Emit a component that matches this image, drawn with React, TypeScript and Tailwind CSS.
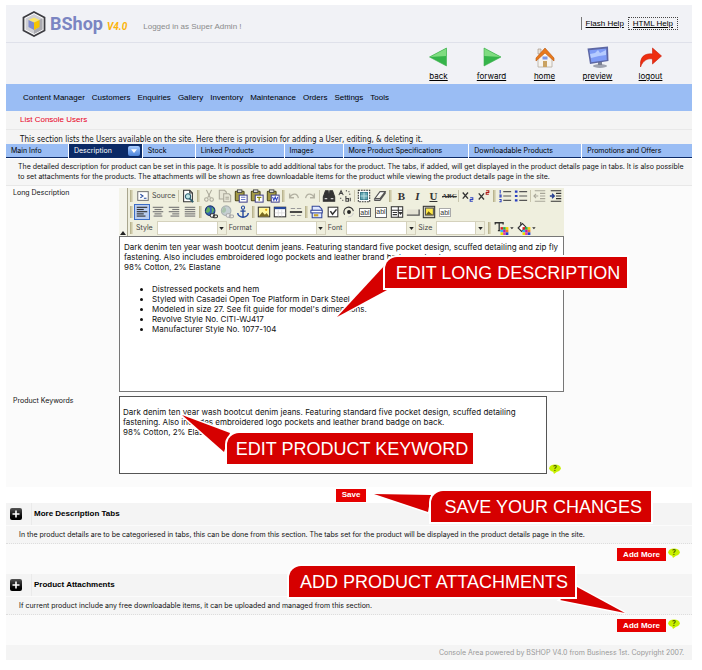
import type { ReactNode } from "react";

/* ---------- small drawings ---------- */

function Glyph({ children }: { children: ReactNode }) {
  return (
    <svg viewBox="0 0 16 16" className="h-3.5 w-3.5" fill="none" stroke="#333" strokeWidth="1.2" aria-hidden="true">
      {children}
    </svg>
  );
}

function Lines({ rows, color = "#333" }: { rows: [number, number, number][]; color?: string }) {
  return (
    <Glyph>
      {rows.map(([x, y, w]) => (
        <rect key={y} x={x} y={y} width={w} height="1.3" fill={color} stroke="none" />
      ))}
    </Glyph>
  );
}

function Clipboard({ badge }: { badge: ReactNode }) {
  return (
    <Glyph>
      <rect x="1.5" y="2.5" width="10" height="11" rx="1" fill="#a39a45" stroke="#4f4a1c" />
      <rect x="4" y="1" width="5" height="3" fill="#ddd" stroke="#444" strokeWidth="1" />
      <rect x="6" y="7" width="9" height="8" fill="#fff" stroke="#44448c" />
      {badge}
    </Glyph>
  );
}

const icons = {
  preview: (
    <Glyph>
      <path d="M3 1.500h7l3 3v10H3z" fill="#fff" />
      <path d="M10 1.500v3h3" />
      <circle cx="8" cy="8.500" r="3" fill="#bfe6e6" stroke="#2d5f6f" />
      <path d="M10 11l4 4" stroke="#2d5f6f" strokeWidth="2" />
    </Glyph>
  ),
  cut: (
    <Glyph>
      <g stroke="#aaa89a">
        <path d="M5 1l4.500 9M11 1L6.500 10" />
        <circle cx="5" cy="12" r="2" />
        <circle cx="11" cy="12" r="2" />
      </g>
    </Glyph>
  ),
  copy: (
    <Glyph>
      <g stroke="#aaa89a" fill="#e6e5d6">
        <path d="M1.500 1.500h6l2 2v8h-8z" />
        <path d="M6.500 5.500h6l2 2v7h-8z" />
        <path d="M8.500 9.500h4M8.500 11.500h4" />
      </g>
    </Glyph>
  ),
  paste: <Clipboard badge={<path d="M8 9.500h5M8 12h5" stroke="#6b78c8" />} />,
  pasteText: <Clipboard badge={<path d="M8 9.500h5M10.500 9.500v4" stroke="#8a8a10" strokeWidth="1.5" />} />,
  pasteWord: <Clipboard badge={<path d="M7.500 9l1.500 4 1.500-4 1.500 4 1.500-4" stroke="#2a3fc0" />} />,
  undo: (
    <Glyph>
      <path d="M3 5v5h5M3 9.500c3-5 9-5 10 1" stroke="#b3b1a2" strokeWidth="1.500" />
    </Glyph>
  ),
  redo: (
    <Glyph>
      <path d="M13 5v5H8M13 9.500c-3-5-9-5-10 1" stroke="#b3b1a2" strokeWidth="1.500" />
    </Glyph>
  ),
  find: (
    <Glyph>
      <path d="M4 2h3l.5 5v7H1.500V9zM12 2H9l-.5 5v7h6V9z" fill="#333" />
      <path d="M3 11h3M10 11h3" stroke="#ccc" />
    </Glyph>
  ),
  replace: (
    <Glyph>
      <path d="M1 7l2.500-5L6 7M2 5h3" stroke="#444" />
      <path d="M9 2h1M12 3h1M13 6h1M3 10v1M5 13h1" stroke="#444" strokeWidth="1.500" />
      <path d="M9 8v6h3v-3H9M14 10v4" stroke="#444" />
    </Glyph>
  ),
  selectAll: (
    <Glyph>
      <rect x="1.500" y="1.500" width="13" height="13" fill="#fff" strokeDasharray="2 1" />
      <rect x="4" y="4" width="8" height="8" fill="#67a8b4" stroke="#3c8090" />
      <path d="M4 8h8M8 4v8" stroke="#b8dde2" />
    </Glyph>
  ),
  eraser: (
    <Glyph>
      <path d="M2 11l6-8h6l-6 8zM2 11v2h6l6-8V3" fill="#fff" stroke="#555" />
    </Glyph>
  ),
  sub: (
    <Glyph>
      <path d="M2 4l6 7M8 4l-6 7" strokeWidth="1.500" />
      <path d="M10.500 10h3v2h-3v2h3" stroke="#2a3fc0" />
    </Glyph>
  ),
  sup: (
    <Glyph>
      <path d="M2 5l6 7M8 5l-6 7" strokeWidth="1.500" />
      <path d="M10.500 2h3v2h-3v2h3" stroke="#b01818" />
    </Glyph>
  ),
  ol: (
    <Glyph>
      <path d="M6 3h9M6 8h9M6 13h9" stroke="#555" />
      <path d="M2.500 1v4M1.500 7h2v2h-2M1.500 12h2v2.500h-2" stroke="#2a3fc0" />
    </Glyph>
  ),
  ul: (
    <Glyph>
      <path d="M6 3h9M6 8h9M6 13h9" stroke="#555" />
      <path d="M1 3h3M1 8h3M1 13h3" stroke="#2a3fc0" strokeWidth="2.500" />
    </Glyph>
  ),
  outdent: (
    <Glyph>
      <path d="M2 2h12M8 5h6M8 8h6M8 11h6M2 14h12M6 8H1M3.500 5.500L1 8l2.500 2.500" stroke="#a8a699" />
    </Glyph>
  ),
  indent: (
    <Glyph>
      <path d="M2 2h12M8 5h6M8 8h6M8 11h6M2 14h12" />
      <path d="M1 8h5M3.500 5.500L6 8l-2.500 2.500" stroke="#223c90" strokeWidth="1.500" />
    </Glyph>
  ),
  left: <Lines rows={[[2, 2, 12], [2, 4.5, 8], [2, 7, 12], [2, 9.5, 8], [2, 12, 10]]} />,
  center: <Lines color="#777" rows={[[2, 2, 12], [4, 4.5, 8], [2, 7, 12], [4, 9.5, 8], [3, 12, 10]]} />,
  right: <Lines color="#777" rows={[[2, 2, 12], [6, 4.5, 8], [2, 7, 12], [6, 9.5, 8], [4, 12, 10]]} />,
  justify: <Lines color="#777" rows={[[2, 2, 12], [2, 4.5, 12], [2, 7, 12], [2, 9.5, 12], [2, 12, 12]]} />,
  link: (
    <Glyph>
      <circle cx="7" cy="6.500" r="5.500" fill="#3565b5" stroke="#1c3570" />
      <path d="M4 3c2 0 3 2 2 4s-3 1-4 0M9 3l2 3-2 3" fill="#5fb060" stroke="#5fb060" />
      <rect x="7" y="10" width="5" height="4" rx="2" fill="#fff" />
      <rect x="10.500" y="11.500" width="5" height="3" rx="1.500" />
    </Glyph>
  ),
  unlink: (
    <Glyph>
      <circle cx="7" cy="6.500" r="5.500" fill="#c5cfd2" stroke="#a8b0b0" />
      <path d="M4 3c2 0 3 2 2 4s-3 1-4 0" fill="#a9c4ac" stroke="#a9c4ac" />
      <rect x="7" y="10" width="5" height="4" rx="2" fill="#eee" stroke="#aaa" />
      <rect x="10.500" y="11.500" width="5" height="3" rx="1.500" stroke="#aaa" />
    </Glyph>
  ),
  anchor: (
    <Glyph>
      <circle cx="8" cy="3" r="1.800" stroke="#24489c" />
      <path d="M8 5v9M5 7h6M2 9c0 3 3 5 6 5s6-2 6-5" stroke="#24489c" strokeWidth="1.600" />
    </Glyph>
  ),
  image: (
    <Glyph>
      <rect x="1.500" y="2.500" width="13" height="11" fill="#fff7a0" />
      <circle cx="10.500" cy="5.500" r="1.300" fill="#e9a400" stroke="none" />
      <path d="M2 13l4-5 3 3 2-2 3 4z" fill="#7a6a20" stroke="none" />
    </Glyph>
  ),
  table: (
    <Glyph>
      <rect x="1.500" y="2.500" width="13" height="11" fill="#fff" />
      <path d="M1.500 3.500h13" stroke="#24489c" strokeWidth="2.500" />
      <path d="M6 5v8M10 5v8M2 9h12" stroke="#ddd" strokeWidth="1" />
    </Glyph>
  ),
  rule: (
    <Glyph>
      <path d="M2 4h5M9 4h5M2 12h5M9 12h5" stroke="#999" />
      <path d="M1 8h14" strokeWidth="2" />
    </Glyph>
  ),
  form: (
    <Glyph>
      <path d="M2.500 1.500h8l3 3v10h-11z" fill="#dfe8ff" stroke="#33469a" />
      <rect x="1" y="6" width="13" height="3" fill="#fff" stroke="#33469a" />
      <rect x="4.500" y="10.500" width="5" height="2.500" fill="#c9a227" stroke="none" />
    </Glyph>
  ),
  check: (
    <Glyph>
      <rect x="2.500" y="2.500" width="11" height="11" fill="#fff" />
      <path d="M5 7l2.500 3.500L12 5" strokeWidth="1.800" />
    </Glyph>
  ),
  radio: (
    <Glyph>
      <path d="M3 11a5.500 5.500 0 1 1 10-4" />
      <circle cx="8" cy="8" r="2.200" fill="#222" stroke="none" />
      <path d="M13 9a5.500 5.500 0 0 1-6 4.500" stroke="#ccc" />
    </Glyph>
  ),
  combo: (
    <Glyph>
      <rect x="1.500" y="2" width="13" height="12" fill="#fff" />
      <path d="M1.500 6h13M9.500 2v12M3 8.500h5M3 11h5" />
      <path d="M10.500 8.500h3l-1.500 2z" fill="#333" />
    </Glyph>
  ),
  button: (
    <Glyph>
      <rect x="1" y="5" width="14" height="6" fill="#e4e2d4" stroke="none" />
      <path d="M1 11.500h14V5" stroke="#555" strokeWidth="1.500" />
    </Glyph>
  ),
  imageButton: (
    <Glyph>
      <rect x="1.500" y="1.500" width="13" height="13" fill="#d7d4c0" />
      <rect x="4" y="3.500" width="9" height="8" fill="#ffe94a" stroke="#555" />
      <path d="M4.500 11l3-4 2 2 3 2z" fill="#6a5b18" stroke="none" />
    </Glyph>
  ),
};

function Swatch({ children }: { children: ReactNode }) {
  return (
    <svg viewBox="0 0 22 16" className="h-3.5 w-5" fill="none" stroke="#333" strokeWidth="1.3" aria-hidden="true">
      {children}
      <g stroke="none">
        <rect x="7" y="7" width="3" height="3" fill="#e02020" />
        <rect x="10" y="7" width="3" height="3" fill="#20b050" />
        <rect x="13" y="7" width="3" height="3" fill="#f4d000" />
        <rect x="7" y="10" width="3" height="3" fill="#30b8f0" />
        <rect x="10" y="10" width="3" height="3" fill="#b020b0" />
        <rect x="13" y="10" width="3" height="3" fill="#f08020" />
        <rect x="7" y="13" width="3" height="3" fill="#f0e000" />
        <rect x="10" y="13" width="3" height="3" fill="#e040a0" />
        <rect x="13" y="13" width="3" height="3" fill="#2040d0" />
        <path d="M18 7h4l-2 2.500z" fill="#333" />
      </g>
    </svg>
  );
}

function Logo() {
  return (
    <svg viewBox="0 0 24 26" className="h-[26px] w-6" aria-hidden="true">
      <path d="M12 1l10.500 5.500v13L12 25 1.500 19.500v-13z" fill="#fff" stroke="#3c3c42" strokeWidth="1.800" />
      <path d="M12 3l8.500 4.600v10.800L12 23l-8.500-4.600V7.600z" fill="#cfcfd4" />
      <path d="M12 23l8.500-4.600V7.600L17 9v7l-5 3z" fill="#a9a9b0" />
      <path d="M12 6.500l5.500 2.500-5.500 2.500L6.500 9z" fill="#fbe66a" />
      <path d="M17.500 9v7L12 19v-7.500z" fill="#f5c400" />
      <path d="M6.500 9v7l5.500 3v-7.500z" fill="#7f8bd0" />
    </svg>
  );
}

const shortcuts: { label: string; art: ReactNode }[] = [
  {
    label: "back",
    art: (
      <>
        <path d="M1.500 11L18.500 2v18z" fill="#35b44a" />
        <path d="M1.500 11L18.500 2v8z" fill="#7fdc80" />
        <path d="M1.500 11L18.500 2v18z" fill="none" stroke="#3cb04c" strokeWidth=".6" />
      </>
    ),
  },
  {
    label: "forward",
    art: (
      <>
        <path d="M20 11L3 2v18z" fill="#35b44a" />
        <path d="M20 11L3 2v8z" fill="#7fdc80" />
        <path d="M20 11L3 2v18z" fill="none" stroke="#3cb04c" strokeWidth=".6" />
      </>
    ),
  },
  {
    label: "home",
    art: (
      <>
        <path d="M4 11l7-6 7 6v10H4z" fill="#f6f3ee" stroke="#b5aba0" strokeWidth=".8" />
        <path d="M4 3h3v5H4z" fill="#e9e2d8" stroke="#a08a78" strokeWidth=".6" />
        <path d="M2 12l9-10 9 10v3l-9-8-9 8z" fill="#e8791c" stroke="#b9560c" strokeWidth=".6" />
        <rect x="8.500" y="10.500" width="5" height="3" fill="#7b97e8" />
        <rect x="9" y="15" width="4" height="6" fill="#c9a262" />
      </>
    ),
  },
  {
    label: "preview",
    art: (
      <>
        <ellipse cx="13" cy="20" rx="7" ry="1.900" fill="#9fa3b0" />
        <path d="M11 15h4v4h-4z" fill="#7c8192" />
        <path d="M.5 2.500l20.500-2 .5 14.500L3 18z" fill="#5d67a4" />
        <path d="M2.300 4.200l17-1.800.5 11.500L4.300 16.200z" fill="#7f9cf6" />
        <path d="M3 8l5-1 3-3 2 3 6-3v5l-7 1-8 2z" fill="#b6ccff" />
      </>
    ),
  },
  {
    label: "logout",
    art: <path d="M.5 21c-1-10 4-14 12-13V2l9 8-9 8v-5C8 12 3 14 .5 21z" fill="#ee2e10" stroke="#c81c08" strokeWidth=".6" />,
  },
];

/* ---------- editor toolbar ---------- */

function Tool({ label, active, children }: { label: string; active?: boolean; children: ReactNode }) {
  return (
    <button
      type="button"
      aria-label={label}
      title={label}
      className={`flex h-4 w-4 shrink-0 items-center justify-center font-['Liberation_Serif',serif] text-[11px] leading-none text-[#333] ${
        active ? "bg-[#b9cdf0] outline-1 -outline-offset-1 outline-[#3a6cc6]" : ""
      }`}
    >
      {children}
    </button>
  );
}

function Grip() {
  return <span className="mx-px h-3 w-[3px] shrink-0 border-x border-l-[#b9b48f] border-r-[#dcd8bd] bg-[#cdc9a8]" />;
}

function Divider() {
  return <span className="mx-px h-3 w-px shrink-0 bg-[#c9c6ae]" />;
}

function Picker({ label, width }: { label: string; width: string }) {
  return (
    <label className="flex items-center gap-1 text-[#444]">
      {label}
      <span className={`relative flex h-[14px] ${width}`}>
        <select className="w-full appearance-none border border-[#d5d2bd] bg-white" defaultValue="">
          <option value="" />
        </select>
        <span className="pointer-events-none absolute inset-y-0 right-0 flex w-[10px] items-center justify-center border border-[#d5d2bd] bg-[#efefde]">
          <svg viewBox="0 0 6 4" className="h-[3px] w-[5px]" aria-hidden="true">
            <path d="M0 0h6L3 4z" fill="#222" />
          </svg>
        </span>
      </span>
    </label>
  );
}

function Toolbar() {
  return (
    <div role="toolbar" aria-label="Formatting" className="flex overflow-hidden bg-[#efefde] text-[7px]">
      <div className="flex w-[9px] shrink-0 items-end justify-center border-r border-[#a9a68e] bg-[#f4f4ea] pb-px">
        <svg viewBox="0 0 6 4" className="h-1 w-1.5" aria-hidden="true">
          <path d="M0 4h6L3 0z" fill="#222" />
        </svg>
      </div>
      <div className="flex flex-col pl-px">
        <div className="flex h-4 items-center">
          <Grip />
          <button type="button" className="flex h-4 items-center gap-0.5 px-0.5 text-[#444]">
            <Glyph>
              <rect x="2" y="3" width="12" height="10" fill="#fff" stroke="#777" />
              <path d="M5 6l3 2-3 2M9 10.500h3" stroke="#24489c" />
            </Glyph>
            Source
          </button>
          <Divider />
          <Tool label="Preview">{icons.preview}</Tool>
          <Grip />
          <Tool label="Cut">{icons.cut}</Tool>
          <Tool label="Copy">{icons.copy}</Tool>
          <Tool label="Paste">{icons.paste}</Tool>
          <Tool label="Paste as plain text">{icons.pasteText}</Tool>
          <Tool label="Paste from Word">{icons.pasteWord}</Tool>
          <Grip />
          <Tool label="Undo">{icons.undo}</Tool>
          <Tool label="Redo">{icons.redo}</Tool>
          <Divider />
          <Tool label="Find">{icons.find}</Tool>
          <Tool label="Replace">{icons.replace}</Tool>
          <Divider />
          <Tool label="Select all">{icons.selectAll}</Tool>
          <Tool label="Remove format">{icons.eraser}</Tool>
          <Grip />
          <Tool label="Bold"><b>B</b></Tool>
          <Tool label="Italic"><b className="italic">I</b></Tool>
          <Tool label="Underline"><b className="underline">U</b></Tool>
          <Tool label="Strike through"><b className="text-[7px] line-through">ABC</b></Tool>
          <Divider />
          <Tool label="Subscript">{icons.sub}</Tool>
          <Tool label="Superscript">{icons.sup}</Tool>
          <Grip />
          <Tool label="Numbered list">{icons.ol}</Tool>
          <Tool label="Bulleted list">{icons.ul}</Tool>
          <Divider />
          <Tool label="Decrease indent">{icons.outdent}</Tool>
          <Tool label="Increase indent">{icons.indent}</Tool>
        </div>
        <div className="flex h-4 items-center">
          <Grip />
          <Tool label="Align left" active>{icons.left}</Tool>
          <Tool label="Centre">{icons.center}</Tool>
          <Tool label="Align right">{icons.right}</Tool>
          <Tool label="Justify">{icons.justify}</Tool>
          <Grip />
          <Tool label="Link">{icons.link}</Tool>
          <Tool label="Remove link">{icons.unlink}</Tool>
          <Tool label="Anchor">{icons.anchor}</Tool>
          <Grip />
          <Tool label="Image">{icons.image}</Tool>
          <Tool label="Table">{icons.table}</Tool>
          <Tool label="Horizontal line">{icons.rule}</Tool>
          <Grip />
          <Tool label="Form">{icons.form}</Tool>
          <Tool label="Checkbox">{icons.check}</Tool>
          <Tool label="Radio button">{icons.radio}</Tool>
          <Tool label="Text field">
            <span className="border border-[#666] bg-white font-['Liberation_Sans',sans-serif] text-[7px]">abl</span>
          </Tool>
          <Tool label="Text area">
            <span className="border border-[#666] bg-white pb-0.5 font-['Liberation_Sans',sans-serif] text-[7px]">abl</span>
          </Tool>
          <Tool label="Selection field">{icons.combo}</Tool>
          <Tool label="Button">{icons.button}</Tool>
          <Tool label="Image button">{icons.imageButton}</Tool>
          <Tool label="Hidden field">
            <span className="border border-[#aaa] bg-white font-['Liberation_Sans',sans-serif] text-[7px]">abl</span>
          </Tool>
        </div>
        <div className="flex h-4 items-center gap-0.5">
          <Grip />
          <Picker label="Style" width="w-[70px]" />
          <Picker label="Format" width="w-[70px]" />
          <Picker label="Font" width="w-[70px]" />
          <Picker label="Size" width="w-[49px]" />
          <Grip />
          <button type="button" aria-label="Text color">
            <Swatch>
              <path d="M1 4V2h9v2M5.500 2v9M4 11h3" strokeWidth="1.500" />
            </Swatch>
          </button>
          <button type="button" aria-label="Background color">
            <Swatch>
              <path d="M2 8l5-5 4 4-5 5zM5 5V1" fill="#fff" />
            </Swatch>
          </button>
        </div>
      </div>
    </div>
  );
}

/* ---------- shared parts ---------- */

function Callout({ text, place, children }: { text: string; place: string; children: ReactNode }) {
  return (
    <div className={`absolute z-10 ${place}`}>
      {children}
      <p className="relative flex h-[31px] items-center justify-center rounded-tl-xl bg-[#d60000] pl-1 font-['Liberation_Sans',Arial,sans-serif] text-[18px] leading-none whitespace-nowrap text-white ring-2 ring-white">
        {text}
      </p>
    </div>
  );
}

function Pointer({ points }: { points: string }) {
  return (
    <svg className="absolute top-0 left-0 overflow-visible" width="1" height="1" aria-hidden="true">
      <polygon points={points} fill="#d60000" stroke="#fff" strokeWidth="3" paintOrder="stroke" />
    </svg>
  );
}

function HelpBubble() {
  return (
    <button type="button" aria-label="Help" className="relative h-2.5 w-3 shrink-0">
      <svg viewBox="0 0 12 10" className="absolute inset-0" aria-hidden="true">
        <ellipse cx="6" cy="4.300" rx="5.800" ry="3.900" fill="#c8f000" />
        <path d="M4 7.500l4 .3L5 10z" fill="#c8f000" />
      </svg>
      <span className="relative block text-[7px] leading-2 font-bold text-[#4a6000]">?</span>
    </button>
  );
}

function RedButton({ children }: { children: ReactNode }) {
  return (
    <button type="button" className="h-[13px] bg-[#e60000] px-1.5 font-['Liberation_Sans',Arial,sans-serif] text-[8px] leading-none font-bold text-white">
      {children}
    </button>
  );
}

function Section({ title, note, children }: { title: string; note: string; children?: ReactNode }) {
  return (
    <section className="bg-[#fbfbfb] pb-[13px]">
      <div className="flex h-[22px] items-stretch bg-[#f4f4f4]">
        <div className="flex w-[26px] items-center border-r border-[#eaeaea] pl-1">
          <button
            type="button"
            aria-label={`Expand ${title}`}
            aria-expanded="false"
            className="flex h-3 w-3 items-center justify-center rounded-xs bg-linear-to-b from-[#555] to-black"
          >
            <svg viewBox="0 0 8 8" className="h-2 w-2" stroke="#fff" strokeWidth="1.6" aria-hidden="true">
              <path d="M4 .5v7M.5 4h7" />
            </svg>
          </button>
        </div>
        <h2 className="flex items-center pl-0.5 font-['Liberation_Sans',Arial,sans-serif] text-[8px] font-bold text-black">{title}</h2>
      </div>
      <p className="mt-px border-b border-dotted border-[#ddd] bg-[#f5f5f5] pl-[13px] leading-[17px]">{note}</p>
      <div className="relative mt-1 flex items-start justify-end gap-0.5 pr-3">
        <RedButton>Add More</RedButton>
        <HelpBubble />
        {children}
      </div>
    </section>
  );
}

const menu = ["Content Manager", "Customers", "Enquiries", "Gallery", "Inventory", "Maintenance", "Orders", "Settings", "Tools"];
const tabs = ["Main Info", "Description", "Stock", "Linked Products", "Images", "More Product Specifications", "Downloadable Products", "Promotions and Offers"];

const keywords =
  "Dark denim ten year wash bootcut denim jeans. Featuring standard five pocket design, scuffed detailing\nfastening. Also includes embroidered logo pockets and leather brand badge on back.\n98% Cotton, 2% Elastane";

export default function App() {
  return (
    <div className="bg-white pt-[5px] pr-2.5 pb-2.5 pl-1.5 font-[Inter,sans-serif] text-[7px] text-[#111]">
      <header className="bg-[#f1f2f6]">
        <div className="flex h-[38px] items-center border-b border-[#dfe1ea] pr-[14px] pl-4">
          <Logo />
          <div className="flex items-baseline gap-1 pl-1 font-[Roboto,sans-serif] font-bold">
            <span className="text-[18px] text-[#7b85c2]">BShop</span>
            <span className="text-[10px] text-[#fbb40c] italic">V4.0</span>
          </div>
          <span className="pt-1.5 pl-4 font-['Liberation_Sans',Arial,sans-serif] text-[8px] text-[#8a8a8a]">Logged in as Super Admin !</span>
          <div className="ml-auto flex items-center gap-1 font-['Liberation_Sans',Arial,sans-serif] text-[8px] text-black">
            <a href="#flash" className="border-l border-[#777] pl-1 leading-[13px] underline">Flash Help</a>
            <a href="#html" className="border border-dotted border-[#444] px-1 leading-[11px] underline">HTML Help</a>
          </div>
        </div>
        <nav aria-label="Shortcuts" className="flex h-[41px] items-start justify-end pt-[3px] pr-[15px]">
          {shortcuts.map(({ label, art }) => (
            <a key={label} href={`#${label}`} className="flex w-[53px] flex-col items-center gap-[3px] text-[8px] leading-[11px] text-black underline">
              <svg viewBox="0 0 22 22" className="h-[22px] w-[22px]" aria-hidden="true">{art}</svg>
              {label}
            </a>
          ))}
        </nav>
      </header>

      <nav aria-label="Main" className="flex h-[27px] items-center gap-[7px] bg-[#9abdf4] pl-[17px] font-['Liberation_Sans',Arial,sans-serif] text-[8px] text-black">
        {menu.map((item) => (
          <a key={item} href="#menu">{item}</a>
        ))}
      </nav>

      <main>
        <h1 className="border-b border-[#e8e8e8] bg-[#f4f4f4] pl-[14px] font-['Liberation_Sans',Arial,sans-serif] text-[8px] leading-[18px] text-[#e8001c]">
          List Console Users
        </h1>
        <p className="h-[14px] overflow-hidden bg-[#f4f4f4] pl-[14px] font-['DejaVu_Sans_Condensed',sans-serif] text-[8px] leading-5 whitespace-nowrap">
          This section lists the Users available on the site. Here there is provision for adding a User, editing, &amp; deleting it.
        </p>

        <div role="tablist" className="grid h-[14px] grid-cols-[62fr_73fr_52fr_88fr_58fr_125fr_112fr_110fr] gap-px bg-white">
          {tabs.map((tab) =>
            tab === "Description" ? (
              <button key={tab} type="button" role="tab" aria-selected="true" className="flex items-center justify-between bg-[#0b2a66] pr-0.5 pl-[5px] text-white">
                {tab}
                <span className="flex h-2.5 w-3 items-center justify-center rounded-xs bg-linear-to-b from-[#a8ccff] to-[#4a82d8]">
                  <svg viewBox="0 0 8 5" className="h-1 w-1.5" aria-hidden="true">
                    <path d="M0 0h8L4 5z" fill="#fff" />
                  </svg>
                </span>
              </button>
            ) : (
              <button key={tab} type="button" role="tab" aria-selected="false" className="border-b border-[#0b2a66] bg-[#9abdf4] pt-px pl-[5px] text-left whitespace-nowrap text-black">
                {tab}
              </button>
            ),
          )}
        </div>

        <p className="mt-px border-b border-[#e8e8e8] bg-[#f6f6f6] py-[3px] pr-2 pl-3 leading-[10px]">
          The detailed description for product can be set in this page. It is possible to add additional tabs for the product. The tabs, if added, will get displayed in the product details page in tabs. It is also possible to set attachments for the products. The attachments will be shown as free downloadable items for the product while viewing the product details page in the site.
        </p>

        <div className="grid grid-cols-[106px_1fr] gap-y-1 bg-[#fbfbfb] pt-0.5 pb-[13px] pl-[7px]">
          <span id="long-label" className="leading-[10px]">Long Description</span>
          <div className="relative max-w-[445px]">
            <Toolbar />
            <div
              role="textbox"
              aria-multiline="true"
              aria-labelledby="long-label"
              contentEditable
              suppressContentEditableWarning
              className="h-[156px] border border-[#777] bg-white px-1 py-[5px] text-[8px] leading-[10px]"
            >
              <p>
                Dark denim ten year wash bootcut denim jeans. Featuring standard five pocket design, scuffed detailing and zip fly
                <br />
                fastening. Also includes embroidered logo pockets and leather brand badge on back.
                <br />
                98% Cotton, 2% Elastane
              </p>
              <ul className="mt-3 list-disc pl-7">
                <li>Distressed pockets and hem</li>
                <li>Styled with Casadei Open Toe Platform in Dark Steel</li>
                <li>Modeled in size 27. See fit guide for model's dimensions.</li>
                <li>Revolve Style No. CITI-WJ417</li>
                <li>Manufacturer Style No. 1077-104</li>
              </ul>
            </div>
            <Callout text="EDIT LONG DESCRIPTION" place="top-[69px] left-[266px] w-[242px]">
              <Pointer points="0,8 -48,60 2,33" />
            </Callout>
          </div>

          <label htmlFor="keywords" className="leading-[10px]">Product Keywords</label>
          <div className="relative flex items-end gap-0.5">
            <textarea
              id="keywords"
              defaultValue={keywords}
              className="h-[78px] w-full max-w-[428px] resize-none overflow-hidden border border-[#555] bg-white px-[3px] py-2.5 text-[8px] leading-[10px] whitespace-pre"
            />
            <HelpBubble />
            <Callout text="EDIT PRODUCT KEYWORD" place="top-[37px] left-[108px] w-[246px]">
              <Pointer points="3,0 -45,-18 -3,19" />
            </Callout>
          </div>
        </div>

        <div className="relative flex h-4 items-center justify-center pl-1">
          <RedButton>Save</RedButton>
          <Callout text="SAVE YOUR CHANGES" place="top-1 left-[62%] w-[220px]">
            <Pointer points="0,4 -57,3 -3,21" />
          </Callout>
        </div>

        <Section
          title="More Description Tabs"
          note="In the product details are to be categoriesed in tabs, this can be done from this section. The tabs set for the product will be displayed in the product details page in the site."
        />
        <Section title="Product Attachments" note="If current product include any free downloadable items, it can be uploaded and managed from this section.">
          <Callout text="ADD PRODUCT ATTACHMENTS" place="-top-[53px] right-[117px] w-[286px]">
            <Pointer points="288,21 336,47 271,34" />
          </Callout>
        </Section>
      </main>

      <footer className="bg-[#f4f4f4] pr-2 text-right leading-[15px] text-[#999]">
        Console Area powered by BSHOP V4.0 from Business 1st. Copyright 2007.
      </footer>
    </div>
  );
}
